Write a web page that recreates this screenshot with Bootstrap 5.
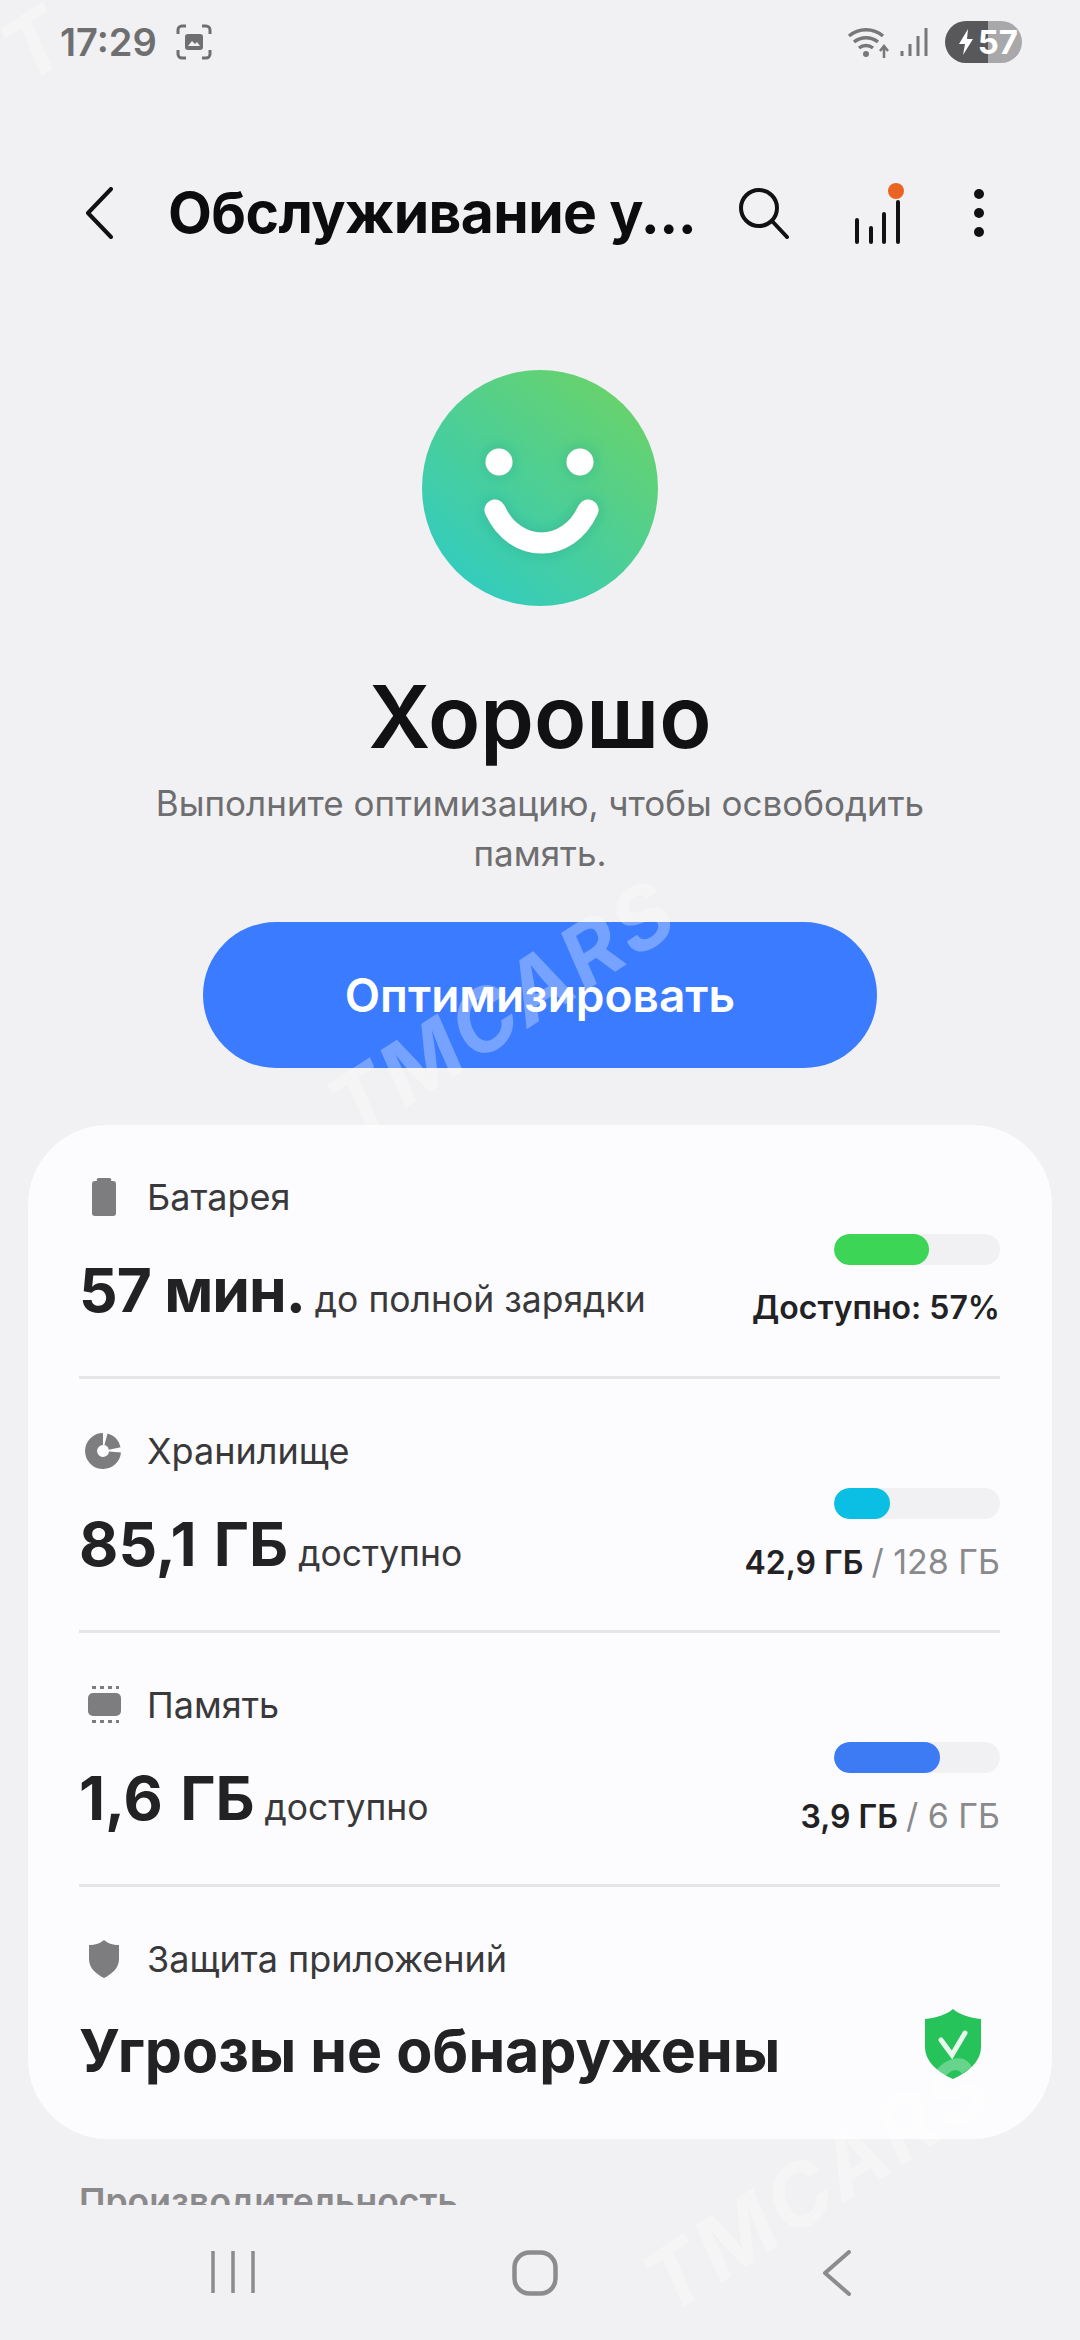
<!DOCTYPE html>
<html lang="ru">

<head>
    <meta charset="utf-8">
    <title>Обслуживание устройства</title>
    <link href="https://cdn.jsdelivr.net/npm/bootstrap@5.3.0/dist/css/bootstrap.min.css" rel="stylesheet">
    <style>
        html, body { margin: 0; background: #f1f1f3; }
        body { font-family: Inter, "Noto Sans", sans-serif; color: #222224; }
        .screen { width: 1080px; height: 2340px; overflow: hidden; position: relative; }
        .status-bar { height: 84px; padding: 0 58px 0 60px; }
        .status-time { font-size: 38px; font-weight: 600; color: #6f6f71; width: 100px; }
        .battery-pill { width: 77px; height: 42px; border-radius: 21px; overflow: hidden; background: linear-gradient(90deg, #58585a 56%, #a8a8aa 56%); color: #fff; font-size: 33px; font-weight: 700; line-height: 42px; }
        .top-bar { height: 90px; margin-top: 84px; padding-left: 85px; }
        .top-title { width: 528px; margin-left: 55px; font-size: 57px; font-weight: 700; line-height: 70px; color: #0c0c0e; white-space: nowrap; letter-spacing: -.6px; }
        .icon-search { margin-left: 41px; }
        .icon-stats { margin-left: 65px; }
        .icon-more { margin-left: 69px; }
        .main-area { height: 2121px; overflow: hidden; }
        .smile-wrap { margin-top: 112px; }
        .hero-title { margin: 61px 0 0; font-size: 86px; font-weight: 600; line-height: 100px; color: #111113; }
        .hero-sub { margin: 11px 0 0; font-size: 35px; line-height: 50px; color: #6e6e70; }
        .btn-optimize { display: block; width: 674px; height: 146px; margin: 44px auto 0; border: 0; border-radius: 73px; background: #3b7bff; color: #fff; font-size: 46px; font-weight: 600; }
        .btn-optimize:hover { background: #3b7bff; color: #fff; }
        .care-card { margin: 57px 28px 0; border: 0; border-radius: 80px; background: #fcfcfe; }
        .care-row { height: 254px; margin: 0 52px 0 51px; border-bottom: 3px solid #e6e6e9; }
        .care-row.last-row { height: 252px; border-bottom: 0; }
        .care-left { padding-top: 48px; }
        .care-label { height: 48px; font-size: 36px; line-height: 48px; color: #39393b; }
        .care-label svg { width: 50px; margin-right: 18px; flex: none; }
        .care-value { margin-top: 34px; height: 70px; font-size: 35.500px; line-height: 70px; white-space: nowrap; color: #39393b; }
        .care-value b { font-size: 60.500px; font-weight: 700; color: #222224; }
        .care-value b.tight-word { letter-spacing: -1px; }
        .care-value b.wide-word { word-spacing: 3px; }
        .care-value .threat-text { font-size: 59px; font-weight: 700; color: #222224; }
        .threat-value { margin-top: 33px; }
        .care-right { padding-top: 109px; }
        .meter { width: 166px; height: 31px; border-radius: 16px; background: #f1f1f4; overflow: hidden; }
        .meter-fill { height: 100%; border-radius: 16px; }
        .meter-note { margin-top: 21px; font-size: 32px; line-height: 44px; font-weight: 600; white-space: nowrap; color: #222224; }
        .meter-note span { font-size: 34px; font-weight: 400; color: #8a8a8c; }
        .shield-ok { margin: 122px 18px 0 0; }
        .section-head { margin: 41px 0 0 79px; font-size: 35.500px; font-weight: 600; line-height: 44px; color: #8a8a8c; }
        .nav-bar { height: 135px; padding: 45px 10px 0 0; }
        .nav-slot { width: 302px; }
        .wm { position: absolute; font-size: 85px; font-style: italic; font-weight: 700; color: rgba(255, 255, 255, .3); letter-spacing: 4px; transform: rotate(-33deg); pointer-events: none; white-space: nowrap; }
        .wm-top { left: 5px; top: -20px; }
        .wm-mid { left: 305px; top: 945px; }
        .wm-bottom { left: 620px; top: 2120px; }
    </style>
</head>

<body>
    <div class="screen d-flex flex-column">
        <div class="status-bar d-flex align-items-center flex-shrink-0">
            <div class="status-time">17:29</div>
            <svg class="ms-3" width="36" height="36" viewBox="0 0 36 36" fill="none" stroke="#6f6f71" stroke-width="3">
                <path d="M2 10V6a4 4 0 0 1 4-4h4M26 2h4a4 4 0 0 1 4 4v4M34 26v4a4 4 0 0 1-4 4h-4M10 34H6a4 4 0 0 1-4-4v-4" />
                <rect x="9" y="10" width="18" height="16" rx="3" fill="#6f6f71" stroke="none" />
                <path d="M12 22l4-5 3 3 2-2 3 4z" fill="#f1f1f3" stroke="none" />
            </svg>
            <svg class="ms-auto" width="44" height="36" viewBox="0 0 44 36" fill="none" stroke="#77777a" stroke-width="3.500">
                <path d="M2 12a26 26 0 0 1 34 0M7 18a19 19 0 0 1 24 0M12 24a11 11 0 0 1 14 0" />
                <circle cx="19" cy="30" r="3" fill="#77777a" stroke="none" />
                <path d="M37 34V23M33 27l4-5 4 5" stroke-width="2.500" />
            </svg>
            <svg class="ms-2" width="30" height="30" viewBox="0 0 30 30" stroke="#77777a" stroke-width="3">
                <path d="M3 29v-5M11 29V17M19 29V9M27 29V1" />
            </svg>
            <div class="battery-pill ms-3 d-flex align-items-center justify-content-end pe-1">
                <svg class="me-1" width="16" height="28" viewBox="0 0 16 28" fill="#fff"><path d="M10 1L1 16h6l-2 11 10-16H9z" /></svg>
                <span>57</span>
            </div>
        </div>

        <div class="main-area flex-shrink-0">
            <div class="top-bar d-flex align-items-center">
                <svg width="28" height="52" viewBox="0 0 28 52" fill="none" stroke="#111113" stroke-width="4" stroke-linecap="round" stroke-linejoin="round">
                    <path d="M26 2L3 26l23 24" />
                </svg>
                <div class="top-title">Обслуживание у...</div>
                <svg class="icon-search" width="52" height="52" viewBox="0 0 52 52" fill="none" stroke="#111113" stroke-width="4" stroke-linecap="round">
                    <circle cx="22" cy="21" r="18" />
                    <path d="M35 34l15 16" />
                </svg>
                <svg class="icon-stats" width="50" height="62" viewBox="0 0 50 62" fill="none" stroke="#111113" stroke-width="4" stroke-linecap="round">
                    <path d="M3 60V38M17 60V46M30 60V32M44 60V20" />
                    <circle cx="42" cy="9" r="8" fill="#eb6320" stroke="none" />
                </svg>
                <svg class="icon-more" width="12" height="50" viewBox="0 0 12 50" fill="#111113">
                    <circle cx="6" cy="6" r="5" />
                    <circle cx="6" cy="25" r="5" />
                    <circle cx="6" cy="44" r="5" />
                </svg>
            </div>

            <div class="smile-wrap text-center">
                <svg width="236" height="236" viewBox="0 0 236 236">
                    <defs>
                        <linearGradient id="smileBg" x1="0.85" y1="0.1" x2="0.2" y2="0.9">
                            <stop offset="0" stop-color="#68d26c" />
                            <stop offset="1" stop-color="#34ccbc" />
                        </linearGradient>
                        <filter id="smileGlow" x="-30%" y="-30%" width="160%" height="160%">
                            <feDropShadow dx="0" dy="0" stdDeviation="7" flood-color="#1f9f8a" flood-opacity=".5" />
                        </filter>
                    </defs>
                    <circle cx="118" cy="118" r="118" fill="url(#smileBg)" />
                    <g filter="url(#smileGlow)">
                        <circle cx="77" cy="92" r="13.500" fill="#fff" />
                        <circle cx="158" cy="92" r="13.500" fill="#fff" />
                        <path d="M73 140c20 44 73 44 93 0" fill="none" stroke="#fff" stroke-width="21" stroke-linecap="round" />
                    </g>
                </svg>
                <h1 class="hero-title">Хорошо</h1>
                <p class="hero-sub">Выполните оптимизацию, чтобы освободить<br>память.</p>
            </div>

            <button type="button" class="btn btn-optimize">Оптимизировать</button>

            <div class="card care-card">
                <div class="care-row d-flex justify-content-between">
                    <div class="care-left">
                        <div class="care-label d-flex align-items-center">
                            <svg height="38" viewBox="0 0 50 38" fill="#7d7d7f"><path d="M20 0h10a2 2 0 0 1 2 3h2a3 3 0 0 1 3 3v29a3 3 0 0 1-3 3H16a3 3 0 0 1-3-3V6a3 3 0 0 1 3-3h2a2 2 0 0 1 2-3z" /></svg>
                            Батарея
                        </div>
                        <div class="care-value"><b class="tight-word">57 мин.</b> до полной зарядки</div>
                    </div>
                    <div class="care-right d-flex flex-column align-items-end">
                        <div class="meter"><div class="meter-fill" style="width: 57%; background: #3dd556"></div></div>
                        <div class="meter-note">Доступно: 57%</div>
                    </div>
                </div>

                <div class="care-row d-flex justify-content-between">
                    <div class="care-left">
                        <div class="care-label d-flex align-items-center">
                            <svg height="36" viewBox="0 0 50 36" fill="none" stroke="#7d7d7f" stroke-width="12">
                                <path d="M24 6A12 12 0 1 0 36 19" />
                                <path d="M27 6.300A12 12 0 0 1 35.700 15.500" />
                            </svg>
                            Хранилище
                        </div>
                        <div class="care-value"><b class="wide-word">85,1 ГБ</b> доступно</div>
                    </div>
                    <div class="care-right d-flex flex-column align-items-end">
                        <div class="meter"><div class="meter-fill" style="width: 34%; background: #0abfe3"></div></div>
                        <div class="meter-note">42,9 ГБ <span>/ 128 ГБ</span></div>
                    </div>
                </div>

                <div class="care-row d-flex justify-content-between">
                    <div class="care-left">
                        <div class="care-label d-flex align-items-center">
                            <svg height="38" viewBox="0 0 50 38" fill="#7d7d7f">
                                <rect x="9" y="7" width="33" height="23" rx="5" />
                                <path d="M13 0h4v3h-4zM21 0h4v3h-4zM29 0h4v3h-4zM37 0h3v3h-3zM13 34h4v3h-4zM21 34h4v3h-4zM29 34h4v3h-4zM37 34h3v3h-3z" />
                            </svg>
                            Память
                        </div>
                        <div class="care-value"><b class="wide-word">1,6 ГБ</b> доступно</div>
                    </div>
                    <div class="care-right d-flex flex-column align-items-end">
                        <div class="meter"><div class="meter-fill" style="width: 64%; background: #3d7bf5"></div></div>
                        <div class="meter-note">3,9 ГБ <span>/ 6 ГБ</span></div>
                    </div>
                </div>

                <div class="care-row last-row d-flex justify-content-between">
                    <div class="care-left">
                        <div class="care-label d-flex align-items-center">
                            <svg height="38" viewBox="0 0 50 38" fill="#7d7d7f"><path d="M25 0c3 3 9 5 15 5v14c0 9-7 15-15 19-8-4-15-10-15-19V5c6 0 12-2 15-5z" /></svg>
                            Защита приложений
                        </div>
                        <div class="care-value threat-value"><span class="threat-text">Угрозы не обнаружены</span></div>
                    </div>
                    <svg class="shield-ok" width="58" height="70" viewBox="0 0 58 70">
                        <path d="M29 0c5 5 17 9 28 10v28c0 15-14 26-28 32C15 64 1 53 1 38V10C12 9 24 5 29 0z" fill="#26c25a" />
                        <path d="M17 31l11 15 13-22" fill="none" stroke="#e8f8ec" stroke-width="5" stroke-linecap="round" />
                    </svg>
                </div>
            </div>

            <div class="section-head">Производительность</div>
        </div>

        <div class="nav-bar d-flex justify-content-center flex-shrink-0">
            <div class="nav-slot text-center">
                <svg width="44" height="44" viewBox="0 0 44 44" stroke="#8c8c8e" stroke-width="3.500"><path d="M2 1v42M22 1v42M42 1v42" /></svg>
            </div>
            <div class="nav-slot text-center">
                <svg width="46" height="46" viewBox="0 0 46 46" fill="none" stroke="#8c8c8e" stroke-width="4.500"><rect x="2.500" y="2.500" width="41" height="41" rx="15" /></svg>
            </div>
            <div class="nav-slot text-center">
                <svg width="30" height="46" viewBox="0 0 30 46" fill="none" stroke="#8c8c8e" stroke-width="4" stroke-linecap="round" stroke-linejoin="round"><path d="M27 2L3 23l24 21" /></svg>
            </div>
        </div>

        <div class="wm wm-top">T</div>
        <div class="wm wm-mid">TMCARS</div>
        <div class="wm wm-bottom">TMCARS</div>
    </div>
    <script src="https://cdn.jsdelivr.net/npm/bootstrap@5.3.0/dist/js/bootstrap.bundle.min.js"></script>
</body>

</html>
